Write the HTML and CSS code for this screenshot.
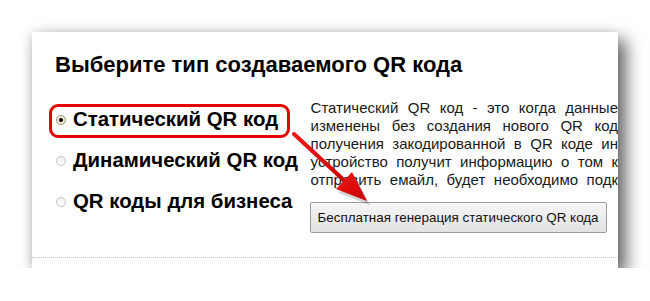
FILE: index.html
```html
<!DOCTYPE html>
<html>
<head>
	<meta charset="utf-8">
	<title>QR код</title>
	<link rel="stylesheet" href="styles.css">
</head>
<body>
<div class="page">
	<div class="panel">
		<h1 class="title">Выберите тип создаваемого QR кода</h1>

		<div class="main">
			<ul class="options">
				<li class="option selected"><span class="radio"></span>Статический QR код</li>
				<li class="option"><span class="radio"></span>Динамический QR код</li>
				<li class="option"><span class="radio"></span>QR коды для бизнеса</li>
			</ul>

			<div class="details">
				<div class="desc">
					<span class="line">Статический QR код - это когда данные</span>
					<span class="line">изменены без создания нового QR код</span>
					<span class="line">получения закодированной в QR коде ин</span>
					<span class="line">устройство получит информацию о том к</span>
					<span class="line">отправить емайл, будет необходимо подк</span>
				</div>
				<button class="generate">Бесплатная генерация статического QR кода</button>
			</div>
		</div>

		<div class="footer"></div>

		<!-- callout arrow -->
		<svg class="arrow" width="130" height="110" viewBox="0 0 130 110">
			<defs>
				<linearGradient id="red" x1="0" y1="0" x2="1" y2="1">
					<stop offset="0" stop-color="#f01818"/>
					<stop offset="1" stop-color="#c80000"/>
				</linearGradient>
			</defs>
			<g transform="translate(2,2)" fill="#000" opacity="0.18">
				<line x1="4" y1="4" x2="56" y2="52" stroke="#000" stroke-width="4"/>
				<polygon points="76,71 45,59 61,42"/>
			</g>
			<line x1="2" y1="2" x2="56" y2="52" stroke="url(#red)" stroke-width="4" stroke-linecap="round"/>
			<polygon points="75,69 44,57 60,40" fill="url(#red)"/>
		</svg>
	</div>
</div>
</body>
</html>
```

FILE: styles.css
```css
/* Reset */

* { margin: 0; padding: 0; box-sizing: border-box; }

body {
	background-color: #fff;
	font-family: "Liberation Sans", Arial, sans-serif;
	color: #111;
}


/* Page */

.page {
	padding: 32px 0 0 32px;
}

.panel {
	position: relative;
	display: flex;
	flex-direction: column;
	width: 586px;
	height: 236px;
	background-color: #fff;
	overflow: hidden;
	box-shadow: 8px 8px 16px rgba(0, 0, 0, 0.6), -2px 0 10px rgba(0, 0, 0, 0.12);
}

.title {
	font-size: 22px;
	font-weight: bold;
	line-height: 24px;
	padding: 21px 0 0 23px;
	color: #000;
}


/* Main */

.main {
	display: flex;
	align-items: flex-start;
	margin-top: 22px;
}

.options {
	list-style: none;
	display: flex;
	flex-direction: column;
	gap: 7px;
	width: 279px;
	padding: 5px 0 0 17px;
}

.option {
	display: flex;
	align-items: center;
	gap: 7px;
	height: 34px;
	padding: 0 0 3px 4px;
	border: 3px solid transparent;
	border-radius: 9px;
	font-size: 20.4px;
	font-weight: bold;
	color: #000;
	white-space: nowrap;
}

.option.selected {
	border-color: #e50000;
	width: 241px;
}

.radio {
	position: relative;
	width: 10px;
	height: 10px;
	flex: none;
	border: 1px solid #c4c4c4;
	border-radius: 50%;
	background: linear-gradient(#eee, #fff);
}

.selected .radio {
	border-color: #9a9680;
	background: #f3ecd2;
}

.selected .radio:after {
	content: "";
	position: absolute;
	left: 2px; top: 2px;
	width: 4px; height: 4px;
	border-radius: 50%;
	background: #000;
}


/* Details */

.details {
	width: 308px;
}

.desc {
	font-size: 15px;
	line-height: 18px;
	color: #1a1a1a;
}

.desc .line {
	display: block;
	text-align: justify;
	text-align-last: justify;
	white-space: nowrap;
}

.generate {
	display: block;
	width: 297px;
	height: 31px;
	margin: 13px 0 0 -1px;
	font-family: "Liberation Sans", Arial, sans-serif;
	font-size: 13.4px;
	color: #111;
	background: linear-gradient(#f6f6f6, #e2e2e2);
	border: 1px solid #9c9c9c;
	border-radius: 2px;
}


/* Footer */

.footer {
	margin-top: auto;
	height: 11px;
	border-top: 1px dotted #c8c8c8;
}


/* Arrow */

.arrow {
	position: absolute;
	left: 260px;
	top: 100px;
}
```
